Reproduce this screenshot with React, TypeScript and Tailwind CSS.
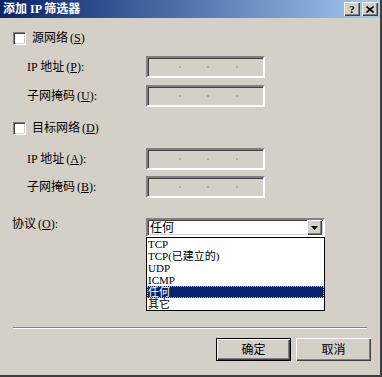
import * as React from 'react';

const font = 'font-["Liberation_Serif","Noto_Sans_CJK_SC",serif]';

const Acc: React.FC<{ k: string }> = ({ k }) => (
	<span className="ml-[2px]">
		(<span className="underline underline-offset-1">{k}</span>)
	</span>
);

const CheckBox: React.FC = () => (
	<span className="box-border block h-[13px] w-[13px] border border-t-[#808080] border-l-[#808080] border-b-white border-r-white bg-white shadow-[inset_1px_1px_0_#404040,inset_-1px_-1px_0_#d4d0c8]" />
);

const IpBox: React.FC = () => (
	<div className="box-border flex h-[22px] w-[119px] items-center border-2 border-t-[#808080] border-l-[#808080] border-b-white border-r-white bg-[#d4d0c8] shadow-[inset_1px_1px_0_#404040,inset_-1px_-1px_0_#d4d0c8]">
		<span className="ml-[31px] h-[2px] w-[2px] bg-[#a8a8a8]" />
		<span className="ml-[26px] h-[2px] w-[2px] bg-[#a8a8a8]" />
		<span className="ml-[27px] h-[2px] w-[2px] bg-[#a8a8a8]" />
	</div>
);

const FieldRow: React.FC<{ label: string; k: string; className?: string }> = ({ label, k, className }) => (
	<div className={`flex items-center ${className ?? ''}`}>
		<span className="w-[146px] pl-[27px] text-[12px] text-black">
			{label}
			<Acc k={k} />:
		</span>
		<IpBox />
	</div>
);

const Btn: React.FC<{ label: string; def?: boolean }> = ({ label, def }) => (
	<div
		className={`box-border flex h-[23px] w-[75px] items-center justify-center bg-[#d4d0c8] text-[12px] text-black ${
			def
				? 'border border-black shadow-[inset_1px_1px_0_#fff,inset_-1px_-1px_0_#404040,inset_-2px_-2px_0_#808080]'
				: 'shadow-[inset_1px_1px_0_#fff,inset_-1px_-1px_0_#404040,inset_-2px_-2px_0_#808080]'
		}`}
	>
		{label}
	</div>
);

const items = ['TCP', 'TCP(已建立的)', 'UDP', 'ICMP', '任何', '其它'];

export default function App() {
	return (
		<div className={`relative flex h-[377px] w-[382px] flex-col overflow-hidden border-r-2 border-b-2 border-r-[#404040] border-b-[#404040] bg-[#d4d0c8] ${font}`}>
			<div className="flex h-[18px] shrink-0 items-center justify-between bg-gradient-to-r from-[#0a246a] to-[#a6caf0] pl-[3px] pr-[2px]">
				<span className="text-[12px] font-bold leading-none text-white">添加 IP 筛选器</span>
				<div className="flex gap-[2px]">
					<span className="flex h-[14px] w-[16px] items-center justify-center bg-[#d4d0c8] text-[11px] font-bold leading-none text-black shadow-[inset_1px_1px_0_#fff,inset_-1px_-1px_0_#404040,inset_-2px_-2px_0_#808080]">
						?
					</span>
					<span className="flex h-[14px] w-[16px] items-center justify-center bg-[#d4d0c8] shadow-[inset_1px_1px_0_#fff,inset_-1px_-1px_0_#404040,inset_-2px_-2px_0_#808080]">
						<svg width="8" height="7" viewBox="0 0 8 7">
							<path d="M0.5 0.5 L7.5 6.5 M7.5 0.5 L0.5 6.5" stroke="#000" strokeWidth="1.6" />
						</svg>
					</span>
				</div>
			</div>

			<div className="mt-[14px] flex items-center gap-[6px] pl-[13px]">
				<CheckBox />
				<span className="text-[12px] leading-[13px] text-black">
					源网络
					<Acc k="S" />
				</span>
			</div>
			<FieldRow label="IP 地址" k="P" className="mt-[11px]" />
			<FieldRow label="子网掩码" k="U" className="mt-[7px]" />

			<div className="mt-[15px] flex items-center gap-[6px] pl-[13px]">
				<CheckBox />
				<span className="text-[12px] leading-[13px] text-black">
					目标网络
					<Acc k="D" />
				</span>
			</div>
			<FieldRow label="IP 地址" k="A" className="mt-[13px]" />
			<FieldRow label="子网掩码" k="B" className="mt-[6px]" />

			<div className="mt-[20px] flex items-start">
				<span className="-mt-[3px] w-[146px] pl-[12px] text-[12px] text-black">
					协议
					<Acc k="O" />:
				</span>
				<div className="relative">
					<div className="box-border flex h-[19px] w-[179px] items-center justify-between border-2 border-t-[#808080] border-l-[#808080] border-b-white border-r-white bg-white shadow-[inset_1px_1px_0_#404040,inset_-1px_-1px_0_#d4d0c8]">
						<span className="pl-[2px] text-[12px] leading-none text-black">任何</span>
						<span className="mr-[1px] flex h-[15px] w-[15px] items-center justify-center bg-[#d4d0c8] shadow-[inset_1px_1px_0_#fff,inset_-1px_-1px_0_#404040,inset_-2px_-2px_0_#808080]">
							<svg width="7" height="4" viewBox="0 0 7 4">
								<path d="M0 0 H7 L3.5 4 Z" fill="#000" />
							</svg>
						</span>
					</div>
					<div className="absolute left-0 top-[19px] box-border w-[179px] border border-black bg-white">
						{items.map((it) => (
							<div
								key={it}
								className={`flex h-[12px] items-center overflow-hidden pl-[1px] text-[11px] leading-[11px] ${
									it === '任何' ? 'bg-[#0a246a] text-white outline-1 -outline-offset-1 outline-dotted outline-[#c0c060]' : 'text-black'
								}`}
							>
								{it}
							</div>
						))}
					</div>
				</div>
			</div>

			<div className="mx-[13px] mt-[90px] h-[2px] border-t border-t-[#808080] border-b border-b-white" />

			<div className="mt-[9px] flex justify-end gap-[5px] pr-[9px]">
				<Btn label="确定" def />
				<Btn label="取消" />
			</div>
		</div>
	);
}
